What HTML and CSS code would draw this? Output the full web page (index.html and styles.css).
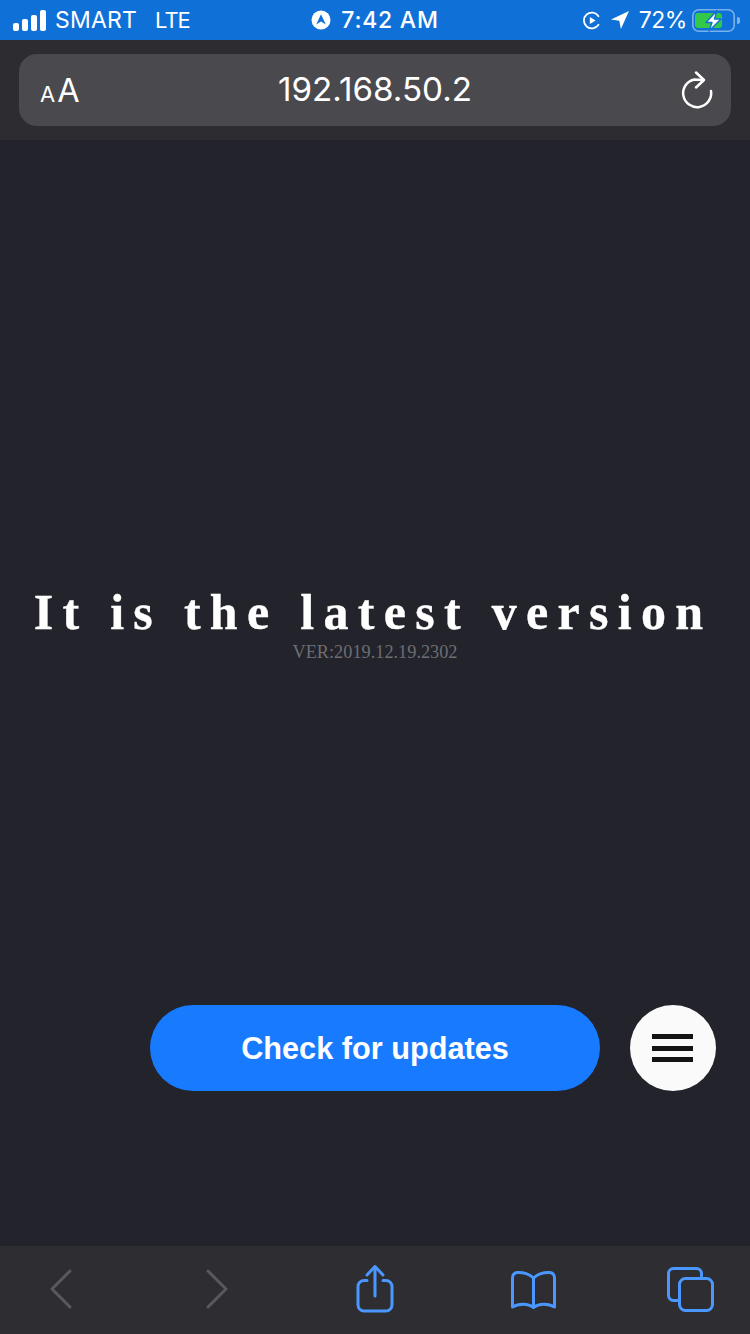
FILE: index.html
```html
<!DOCTYPE html>
<html lang="en">
<head>
<meta charset="utf-8">
<title>Update</title>
<link rel="stylesheet" href="styles.css">
</head>
<body>
<div class="screen">
  <header class="status">
    <div class="status-left">
      <div class="signal"><i class="b1"></i><i class="b2"></i><i class="b3"></i><i class="b4"></i></div>
      <span class="carrier">SMART</span>
      <span class="net">LTE</span>
    </div>
    <div class="status-center">
      <svg class="nav-badge" viewBox="0 0 20 20"><circle cx="10" cy="10" r="9.5" fill="#fff"/><path d="M10 4.2 L14.8 14.6 L10 11.6 L5.2 14.6 Z" fill="#0f71d8"/></svg>
      <span class="time">7:42 AM</span>
    </div>
    <div class="status-right">
      <svg class="lock" viewBox="0 0 20 20"><path d="M17.2 5.2 A8.8 8.8 0 1 0 17.2 14.8" fill="none" stroke="#fff" stroke-width="2" stroke-linecap="round"/><path d="M7.6 6 L14 10 L7.6 14 Z" fill="#fff"/></svg>
      <svg class="loc" viewBox="0 0 20 20"><path d="M20 0 L11 20 L9.2 10.8 L0 9.4 Z" fill="#fff"/></svg>
      <span class="pct">72%</span>
      <svg class="batt" viewBox="0 0 48 23"><rect x=".8" y=".8" width="41.4" height="21.4" rx="6" fill="none" stroke="#fff" stroke-opacity=".45" stroke-width="1.6"/><path d="M45 8 a3 3 0 0 1 0 7 Z" fill="#fff" fill-opacity=".45"/><rect x="3" y="4" width="27" height="15" rx="3" fill="#34c84a"/><path d="M25 1.5 L14 13.5 H20 L17 22 L29 10 H22.5 Z" fill="#fff" stroke="#0f71d8" stroke-width="1.4" stroke-linejoin="round"/></svg>
    </div>
  </header>

  <div class="toolbar">
    <div class="urlbar">
      <span class="aa"><span class="aa-small">A</span><span class="aa-big">A</span></span>
      <span class="url">192.168.50.2</span>
      <svg class="reload" viewBox="0 0 34 40"><path d="M31 21 A14 14 0 1 1 14.5 9.4 Q18 9.6 23 10" fill="none" stroke="#fff" stroke-width="2.5" stroke-linecap="round"/><path d="M16 2.5 L24 10 L16 17.5" fill="none" stroke="#fff" stroke-width="2.5" stroke-linecap="round" stroke-linejoin="round"/></svg>
    </div>
  </div>

  <main class="page">
    <div class="message">
      <h1 class="title">It is the latest version</h1>
      <p class="ver">VER:2019.12.19.2302</p>
    </div>
    <div class="actions">
      <button class="check">Check for updates</button>
      <button class="menu" aria-label="Menu"><i></i><i></i><i></i></button>
    </div>
  </main>

  <nav class="bottom">
    <svg class="ico" viewBox="0 0 60 60"><path d="M40 12 L22 30 L40 48" transform="translate(0 -1)" fill="none" stroke="#59595c" stroke-width="3" stroke-linecap="round" stroke-linejoin="round"/></svg>
    <svg class="ico" viewBox="0 0 60 60"><path d="M20 11 L38 29 L20 47" fill="none" stroke="#59595c" stroke-width="3" stroke-linecap="round" stroke-linejoin="round"/></svg>
    <svg class="ico" viewBox="0 0 60 60"><g fill="none" stroke="#4a98ff" stroke-width="3" stroke-linecap="round" stroke-linejoin="round"><path d="M22 20.5 H19 a6 6 0 0 0 -6 6 V45 a6 6 0 0 0 6 6 H41 a6 6 0 0 0 6 -6 V26.5 a6 6 0 0 0 -6 -6 H38"/><path d="M30 36 V7"/><path d="M22 15 L30 6.5 L38 15"/></g></svg>
    <svg class="ico" viewBox="0 0 60 60"><g fill="none" stroke="#4a98ff" stroke-width="3" stroke-linecap="round" stroke-linejoin="round"><path d="M30.5 18 C27 14 20 12 14 12.5 C11 13 9.5 15 9.5 18 V47 C15 43.5 25 43 30.5 47.5 C36 43 46 43.5 51.5 47 V18 C51.5 15 50 13 47 12.5 C41 12 34 14 30.5 18 Z"/><path d="M30.5 18 V46.5"/></g></svg>
    <svg class="ico" viewBox="0 0 60 60"><g fill="none" stroke="#4a98ff" stroke-width="3" stroke-linecap="round" stroke-linejoin="round"><path d="M18 40.5 H13.5 a5 5 0 0 1 -5 -5 V13.5 a5 5 0 0 1 5 -5 H36.5 a5 5 0 0 1 5 5 V17"/><rect x="19.5" y="18.5" width="33" height="32" rx="6"/></g></svg>
  </nav>
</div>
</body>
</html>
```

FILE: styles.css
```css
* { box-sizing: border-box; }
html, body { margin: 0; padding: 0; }
body { width: 750px; height: 1334px; overflow: hidden; background: #22232b; }
.screen { width: 750px; height: 1334px; display: flex; flex-direction: column; }

.status {
  height: 40px; background: #0f71d8; color: #fff;
  display: grid; grid-template-columns: 1fr auto 1fr; align-items: center;
  font-family: Inter, "Liberation Sans", sans-serif; font-size: 23px; line-height: 40px;
}
.status-left { display: flex; align-items: center; padding-left: 13px; }
.signal { display: flex; align-items: flex-end; gap: 3px; height: 21px; margin-right: 9px; }
.signal i { width: 6px; background: #fff; border-radius: 2px; display: block; }
.b1 { height: 8px; } .b2 { height: 12px; } .b3 { height: 16px; } .b4 { height: 21px; }
.carrier { font-weight: 400; letter-spacing: .2px; }
.net { margin-left: 18px; font-size: 22px; letter-spacing: -1px; }
.status-center { display: flex; align-items: center; gap: 10px; }
.nav-badge { width: 20px; height: 20px; }
.time { font-weight: 500; letter-spacing: .75px; }
.status-right { display: flex; align-items: center; justify-content: flex-end; padding-right: 10px; }
.lock { width: 18px; height: 19px; margin-right: 10px; }
.loc { width: 18px; height: 18px; margin-right: 10px; }
.pct { margin-right: 5px; letter-spacing: -.45px; }
.batt { width: 48px; height: 23px; }

.toolbar { height: 100px; background: #2d2c31; padding: 14px 19px; }
.urlbar {
  height: 72px; background: #4a494e; border-radius: 18px; color: #fff;
  display: flex; align-items: center; justify-content: space-between; padding: 0 17px 0 21px;
  font-family: Inter, "Liberation Sans", sans-serif;
}
.aa { display: flex; align-items: baseline; gap: 2px; width: 100px; line-height: 1; margin-top: 2px; }
.aa-small { font-size: 22px; }
.aa-big { font-size: 32.5px; }
.url { font-size: 33.2px; line-height: 1; margin-left: -4px; }
.reload { width: 34px; height: 40px; margin-left: 66px; }

.page { flex: 1; display: flex; flex-direction: column; background: #22232b; padding-top: 442px; }
.message { text-align: center; height: 423px; }
.title {
  margin: 0; padding-right: 4px; font-family: "Liberation Serif", serif; font-weight: 700; font-size: 50px; line-height: 60px;
  letter-spacing: 9.3px; color: #fff; white-space: nowrap; -webkit-text-stroke: .35px #fff;
}
.ver {
  margin: 0; font-family: "Liberation Serif", serif; font-size: 18.3px; line-height: 20px; color: #6d6e72;
}
.actions { display: flex; align-items: center; padding-left: 150px; gap: 30px; }
.check {
  width: 450px; height: 86px; border: 0; border-radius: 43px; background: #177aff; color: #fff;
  font-family: "Liberation Sans", sans-serif; font-weight: 700; font-size: 30.7px; padding: 2px 0 0;
}
.menu {
  width: 86px; height: 86px; border: 0; border-radius: 50%; background: #fafafa; padding: 0 1px 0 0;
  display: flex; flex-direction: column; align-items: center; justify-content: center; gap: 6.5px;
}
.menu i { display: block; width: 41px; height: 5px; background: #141414; }

.bottom {
  height: 88px; background: #2d2d32;
  display: flex; align-items: center; justify-content: space-between; padding: 0 30px;
}
.ico { width: 60px; height: 60px; display: block; }
```
